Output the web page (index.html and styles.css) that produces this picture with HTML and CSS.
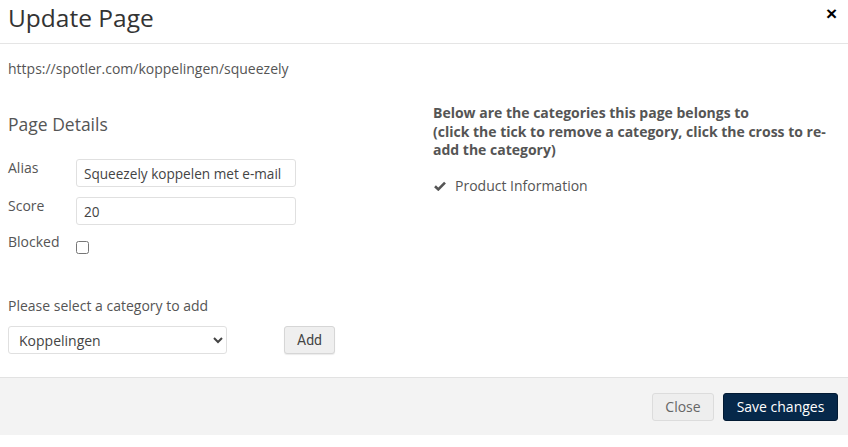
FILE: index.html
```html
<!DOCTYPE html>
<html>
<head>
<meta charset="utf-8">
<link rel="stylesheet" href="styles.css">
</head>
<body>
<div class="modal">
  <div class="modal-header">
    <h1 class="title">Update Page</h1>
    <button class="x-close" type="button">&times;</button>
  </div>
  <div class="modal-body">
    <div class="url">https://spotler.com/koppelingen/squeezely</div>
    <div class="columns">
      <div class="col-left">
        <h2 class="section-title">Page Details</h2>
        <div class="form-row first-row">
          <label class="lbl">Alias</label>
          <input class="txt" type="text" value="Squeezely koppelen met e-mail">
        </div>
        <div class="form-row">
          <label class="lbl">Score</label>
          <input class="txt" type="text" value="20">
        </div>
        <div class="form-row check-row">
          <label class="lbl">Blocked</label>
          <input class="chk" type="checkbox">
        </div>
        <div class="add-label">Please select a category to add</div>
        <div class="add-row">
          <select class="sel">
            <option>Koppelingen</option>
          </select>
          <button class="btn-add" type="button">Add</button>
        </div>
      </div>
      <div class="col-right">
        <p class="info">Below are the categories this page belongs to<br>(click the tick to remove a category, click the cross to re-add the category)</p>
        <div class="cat">
          <svg class="tick" width="12" height="10" viewBox="0 0 12 10"><path d="M1 5.2 L4.3 8.4 L11 1.6" fill="none" stroke="#555" stroke-width="2.6" stroke-linejoin="miter"/></svg>
          <span>Product Information</span>
        </div>
      </div>
    </div>
  </div>
  <div class="modal-footer">
    <button class="btn btn-close" type="button">Close</button>
    <button class="btn btn-save" type="button">Save changes</button>
  </div>
</div>
</body>
</html>
```

FILE: styles.css
```css
html, body {
  margin: 0;
  padding: 0;
  background: #fff;
}
body {
  font-family: "Open Sans", "Liberation Sans", sans-serif;
  font-size: 14px;
  color: #555;
}
.modal {
  width: 848px;
}
.modal-header {
  height: 43px;
  border-bottom: 1px solid #e5e5e5;
  display: flex;
  justify-content: space-between;
  align-items: flex-start;
  padding: 0 11px 0 8px;
}
.title {
  margin: 0;
  font-size: 24.5px;
  font-weight: 400;
  line-height: 36px;
  color: #333;
}
.x-close {
  border: 0;
  background: none;
  padding: 0;
  margin-top: 4px;
  font-family: "Liberation Sans", sans-serif;
  font-size: 19px;
  font-weight: 700;
  line-height: 20px;
  color: #000;
}
.modal-body {
  box-sizing: border-box;
  padding: 15px 8px 0;
  height: 333px;
}
.url {
  line-height: 20px;
}
.columns {
  display: flex;
  margin-top: 25px;
}
.col-left {
  width: 425px;
}
.col-right {
  flex: 1;
}
.section-title {
  margin: 8px 0 0;
  font-size: 17.5px;
  font-weight: 400;
  line-height: 24px;
  color: #555;
}
.form-row {
  display: flex;
  align-items: flex-start;
  margin-top: 10px;
}
.first-row {
  margin-top: 23px;
}
.lbl {
  width: 68px;
  line-height: 20px;
  margin-top: -1px;
}
.txt {
  box-sizing: border-box;
  width: 220px;
  height: 28px;
  border: 1px solid #e0e0e0;
  border-radius: 3px;
  padding: 0 7px;
  font-family: "Open Sans", sans-serif;
  font-size: 13.6px;
  color: #444;
  outline: none;
}
.check-row {
  margin-top: 9px;
}
.check-row .lbl {
  margin-top: -2px;
}
.chk {
  margin: 7px 0 0 0;
  width: 13px;
  height: 13px;
}
.add-label {
  margin-top: 42px;
  line-height: 20px;
}
.add-row {
  display: flex;
  align-items: center;
  margin-top: 10px;
}
.sel {
  width: 219px;
  height: 28px;
  border: 1px solid #e0e0e0;
  border-radius: 3px;
  background: #fff;
  padding: 0 6px;
  font-family: "Open Sans", sans-serif;
  font-size: 14px;
  color: #444;
}
.btn-add {
  margin-left: 57px;
  width: 51px;
  height: 28px;
  border: 1px solid #d6d6d6;
  border-radius: 3px;
  background: #efefef;
  font-family: Roboto, "Liberation Sans", sans-serif;
  font-size: 14px;
  color: #444;
  box-shadow: 0 1px 1px rgba(0,0,0,0.08);
}
.info {
  margin: 0;
  font-weight: 700;
  line-height: 18.5px;
}
.cat {
  display: flex;
  align-items: center;
  margin-top: 16px;
  line-height: 20px;
}
.tick {
  margin: 0 9px 0 1px;
}
.modal-footer {
  height: 57px;
  background: #f3f3f3;
  border-top: 1px solid #e2e2e2;
  display: flex;
  justify-content: flex-end;
  align-items: center;
  padding: 0 10px;
  gap: 9px;
}
.btn {
  height: 28px;
  border-radius: 3px;
  font-family: "Open Sans", sans-serif;
  font-size: 14px;
  padding: 0 12px;
}
.btn-close {
  width: 62px;
  background: #eee;
  border: 1px solid #dcdcdc;
  color: #666;
}
.btn-save {
  width: 115px;
  background: #06284a;
  border: 1px solid #021a33;
  color: #fff;
}
```
